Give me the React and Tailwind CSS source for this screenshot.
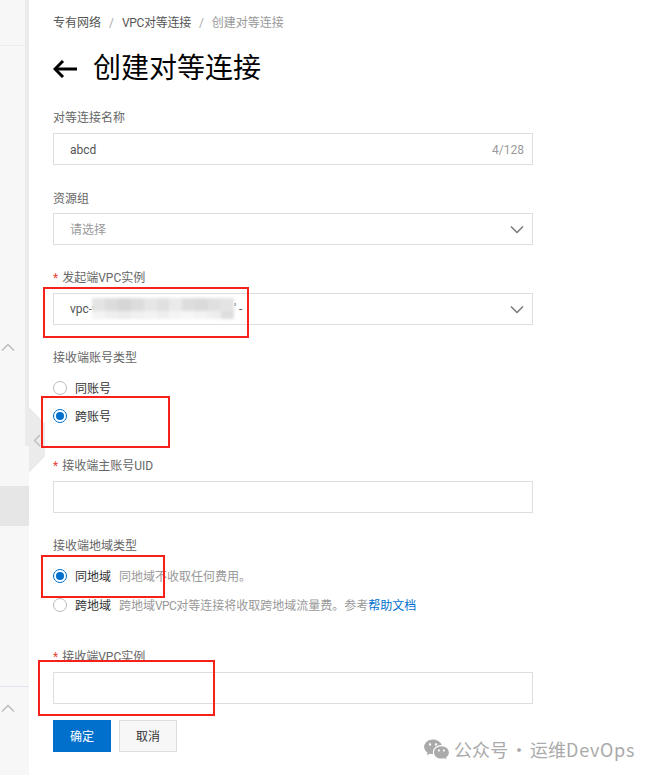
import React from 'react';
import { RiWechatFill } from 'react-icons/ri';

const Label = ({ children, required, className = '' }) => (
  <div className={`h-4 leading-4 text-xs text-[#666] ${className}`}>
    {required && <span className="text-[#e84738] mr-1">*</span>}
    {children}
  </div>
);

const Chevron = ({ className = '', dir = 'down' }) => (
  <svg className={className} width="14" height="9" viewBox="0 0 14 9" fill="none" stroke="currentColor" strokeWidth="1.5">
    <path d={dir === 'down' ? 'M1 1.5 L7 7.5 L13 1.5' : 'M1 7.5 L7 1.5 L13 7.5'} />
  </svg>
);

const Box = ({ children, className = '' }) => (
  <div className={`h-8 w-[480px] border border-[#dedede] bg-white flex items-center pl-4 pr-2 text-xs ${className}`}>
    {children}
  </div>
);

const Radio = ({ checked, label, hint, className = '' }) => (
  <div className={`flex items-center h-4 ${className}`}>
    {checked ? (
      <span className="w-[14px] h-[14px] rounded-full border border-[#0070cc] flex items-center justify-center">
        <span className="w-2 h-2 rounded-full bg-[#0070cc]" />
      </span>
    ) : (
      <span className="w-[14px] h-[14px] rounded-full border border-[#bbb] bg-white" />
    )}
    <span className="ml-2 text-xs text-[#333] translate-y-px">{label}</span>
    {hint && <span className="ml-2 text-xs text-[#999] translate-y-px">{hint}</span>}
  </div>
);

const mosaicTop = ['#e4e4e4', '#dcdcdc', '#d6d6d6', '#dcdcdc', '#e6e6e6', '#e0e0e0', '#eaeaea', '#dddddd', '#dadada', '#e0e0e0', '#e4e4e4'];
const mosaicBottom = ['#f4f4f4', '#efefef', '#ececec', '#f0f0f0', '#f3f3f3', '#efefef', '#f4f4f4', '#f6f6f6', '#f3f3f3', '#eeeeee', '#dedede'];

const Sidebar = () => (
  <div className="relative w-[29px] shrink-0 h-full bg-[#f7f7f7] flex flex-col text-[#bbb]">
    <div className="h-[46px] border-b border-[#ececec]" />
    <Chevron className="ml-[1px] mt-[297px]" dir="up" />
    <div className="mt-[134px] h-10 bg-[#e6e6e6]" />
    <div className="mt-[160px] border-b border-[#e4e2f0]" />
    <Chevron className="ml-[1px] mt-[17px]" dir="up" />
    {/* scroll track */}
    <div className="absolute left-[25px] top-0 w-[4px] h-[446px] bg-[#ebebeb]" />
  </div>
);

export default function App() {
  return (
    <div className="relative w-[655px] h-[775px] overflow-hidden bg-white flex font-['Roboto','Noto_Sans_CJK_SC',sans-serif]">
      <Sidebar />

      <main className="pl-6 pt-[15px] flex flex-col">
        <nav className="h-4 leading-4 text-xs flex items-center text-[#555]">
          <span>专有网络</span>
          <span className="mx-[8px] text-[#aaa]">/</span>
          <span className="tracking-[-0.3px]">VPC对等连接</span>
          <span className="mx-[8px] text-[#aaa]">/</span>
          <span className="text-[#999]">创建对等连接</span>
        </nav>

        <div className="mt-[14px] h-[48px] flex items-center">
          <svg width="24" height="18" viewBox="0 0 24 18" fill="none" stroke="#000" strokeWidth="3">
            <path d="M24 9 H2" />
            <path d="M10 1 L2 9 L10 17" />
          </svg>
          <h1 className="ml-4 text-[28px] leading-[48px] font-normal text-black">创建对等连接</h1>
        </div>

        <Label className="mt-[17px]">对等连接名称</Label>
        <Box className="mt-[7px] justify-between">
          <span className="text-[#555] translate-y-px">abcd</span>
          <span className="text-[#999] translate-y-px">4/128</span>
        </Box>

        <Label className="mt-[26px]">资源组</Label>
        <Box className="mt-[6px] justify-between">
          <span className="text-[#999] translate-y-px">请选择</span>
          <Chevron className="text-[#777]" />
        </Box>

        <Label required className="mt-[25px]">发起端VPC实例</Label>
        <Box className="mt-[7px] justify-between">
          <span className="relative text-[#555]">
            vpc-v
            <span className="absolute left-[22px] top-[-3px] w-[142px] blur-[1.5px] flex flex-col">
              <span className="flex h-[13px]">
                {mosaicTop.map((c, i) => (
                  <span key={i} className="flex-1" style={{ background: c }} />
                ))}
              </span>
              <span className="flex h-[8px]">
                {mosaicBottom.map((c, i) => (
                  <span key={i} className="flex-1" style={{ background: c }} />
                ))}
              </span>
            </span>
            <span className="ml-[136px]">' -</span>
          </span>
          <Chevron className="text-[#777]" />
        </Box>

        <Label className="mt-[25px]">接收端账号类型</Label>
        <Radio label="同账号" className="mt-[14px]" />
        <Radio checked label="跨账号" className="mt-3" />

        <Label required className="mt-[34px]">接收端主账号UID</Label>
        <Box className="mt-[7px]" />

        <Label className="mt-[25px]">接收端地域类型</Label>
        <Radio checked label="同地域" hint="同地域不收取任何费用。" className="mt-[14px]" />
        <Radio
          label="跨地域"
          hint={
            <>
              跨地域<span className="tracking-[-0.6px]">VPC</span>对等连接将收取跨地域流量费。参考<span className="text-[#0070cc]">帮助文档</span>
            </>
          }
          className="mt-[13px]"
        />

        <Label required className="mt-[36px]">接收端VPC实例</Label>
        <Box className="mt-[7px]" />

        <div className="mt-4 flex gap-2">
          <button className="w-[58px] h-8 pt-px bg-[#0070cc] text-white text-xs">确定</button>
          <button className="w-[58px] h-8 pt-px bg-[#f7f7f7] border border-[#dedede] text-[#333] text-xs">取消</button>
        </div>
      </main>

      {/* sidebar collapse handle */}
      <div className="absolute left-[29px] top-[407px] w-4 h-[66px] bg-[#ebebeb] [clip-path:polygon(0_0,100%_25%,100%_75%,0_100%)]" />
      <svg className="absolute left-[33px] top-[434px]" width="8" height="13" viewBox="0 0 8 13" fill="none" stroke="#bbb" strokeWidth="1.3">
        <path d="M7 1 L1.5 6.5 L7 12" />
      </svg>

      {/* red annotation boxes */}
      <div className="absolute left-[43px] top-[287px] w-[206px] h-[51px] border-[2px] border-[#f5211a]" />
      <div className="absolute left-[41px] top-[396px] w-[129px] h-[52px] border-[2px] border-[#f5211a]" />
      <div className="absolute left-[41px] top-[555px] w-[124px] h-[43px] border-[2px] border-[#f5211a]" />
      <div className="absolute left-[38px] top-[660px] w-[177px] h-[56px] border-[2px] border-[#f5211a]" />

      {/* watermark */}
      <div className="absolute left-[423px] top-[736px] flex items-center text-[#aaa]">
        <RiWechatFill size={27} />
        <span className="ml-[4px] -translate-y-px text-[18px] leading-[26px] [word-spacing:-2px] font-['Noto_Sans_CJK_SC',sans-serif] whitespace-nowrap">
          公众号 · 运维<span className="tracking-[0.7px]">DevOps</span>
        </span>
      </div>
    </div>
  );
}
